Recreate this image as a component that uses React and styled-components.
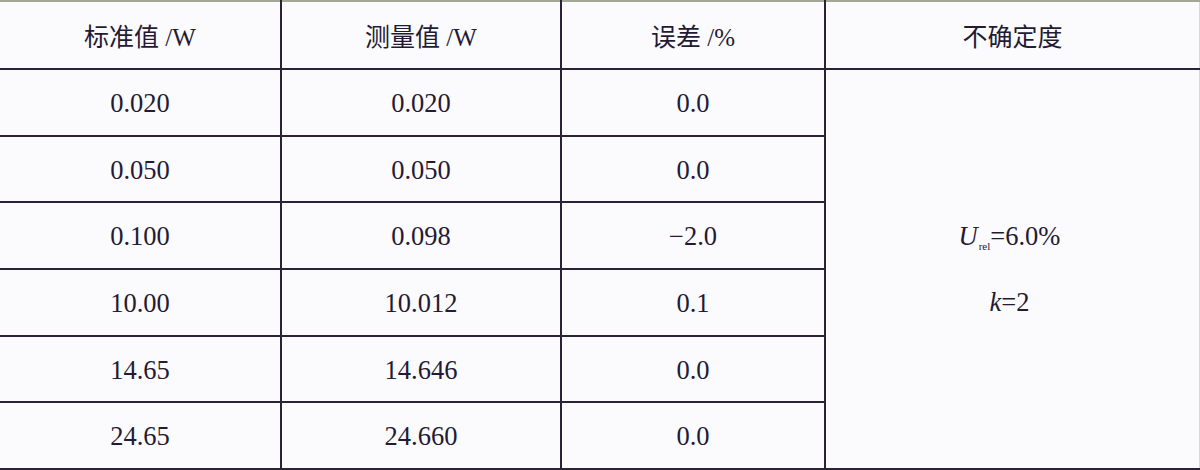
import React from "react";
import styled, { createGlobalStyle } from "styled-components";

const rows = [
  ["0.020", "0.020", "0.0"],
  ["0.050", "0.050", "0.0"],
  ["0.100", "0.098", "\u22122.0"],
  ["10.00", "10.012", "0.1"],
  ["14.65", "14.646", "0.0"],
  ["24.65", "24.660", "0.0"],
];

function App() {
  return (
    <>
      <GlobalStyle />
      <Table>
        <colgroup>
          <col style={{ width: 281 }} />
          <col style={{ width: 280 }} />
          <col style={{ width: 264 }} />
          <col />
        </colgroup>
        <thead>
          <tr>
            <HeadCell>标准值 /W</HeadCell>
            <HeadCell>测量值 /W</HeadCell>
            <HeadCell>误差 /%</HeadCell>
            <HeadCell $last>不确定度</HeadCell>
          </tr>
        </thead>
        <tbody>
          {rows.map((r, i) => (
            <Row key={i}>
              <Cell>{r[0]}</Cell>
              <Cell>{r[1]}</Cell>
              <Cell>{r[2]}</Cell>
              {i === 0 && (
                <Cell $last rowSpan={rows.length}>
                  <Uncertainty>
                    <span>
                      <em>U</em>
                      <Sub>rel</Sub>=6.0%
                    </span>
                    <span>
                      <em>k</em>=2
                    </span>
                  </Uncertainty>
                </Cell>
              )}
            </Row>
          ))}
        </tbody>
      </Table>
    </>
  );
}

const ink = "#241a33";
const line = "#2b2238";
const serif = `"Liberation Serif", "Times New Roman", "DejaVu Serif", serif`;

const GlobalStyle = createGlobalStyle`
  body {
    margin: 0;
    background: #fbfbfe;
    color: ${ink};
    font-family: ${serif};
    overflow: hidden;
  }
`;

const Table = styled.table`
  width: 1200px;
  border-collapse: collapse;
  table-layout: fixed;
  border-top: 2px solid #a3a795;
  border-bottom: 3px solid ${line};
  border-right: 1px solid #d8d8de;
`;

const HeadCell = styled.th`
  height: 66px;
  padding: 0;
  font-weight: normal;
  font-size: 25px;
  font-family: ${serif}, "Noto Sans CJK SC", sans-serif;
  text-align: center;
  border-right: ${(p) => (p.$last ? "none" : `2px solid ${line}`)};
  border-bottom: 2px solid ${line};
`;

const Row = styled.tr`
  height: 66.7px;
`;

const Cell = styled.td`
  padding: 2px 0 0;
  font-size: 26.5px;
  font-family: ${serif};
  text-align: center;
  vertical-align: middle;
  border-right: ${(p) => (p.$last ? "none" : `2px solid ${line}`)};
  border-bottom: 2px solid ${line};
`;

const Uncertainty = styled.div`
  display: flex;
  flex-direction: column;
  align-items: center;
  gap: 35px;
  padding: 0 6px 0 0;
  em {
    font-style: italic;
  }
`;

const Sub = styled.sub`
  font-size: 11px;
  vertical-align: -5px;
  margin-left: 1px;
`;

export default App;
